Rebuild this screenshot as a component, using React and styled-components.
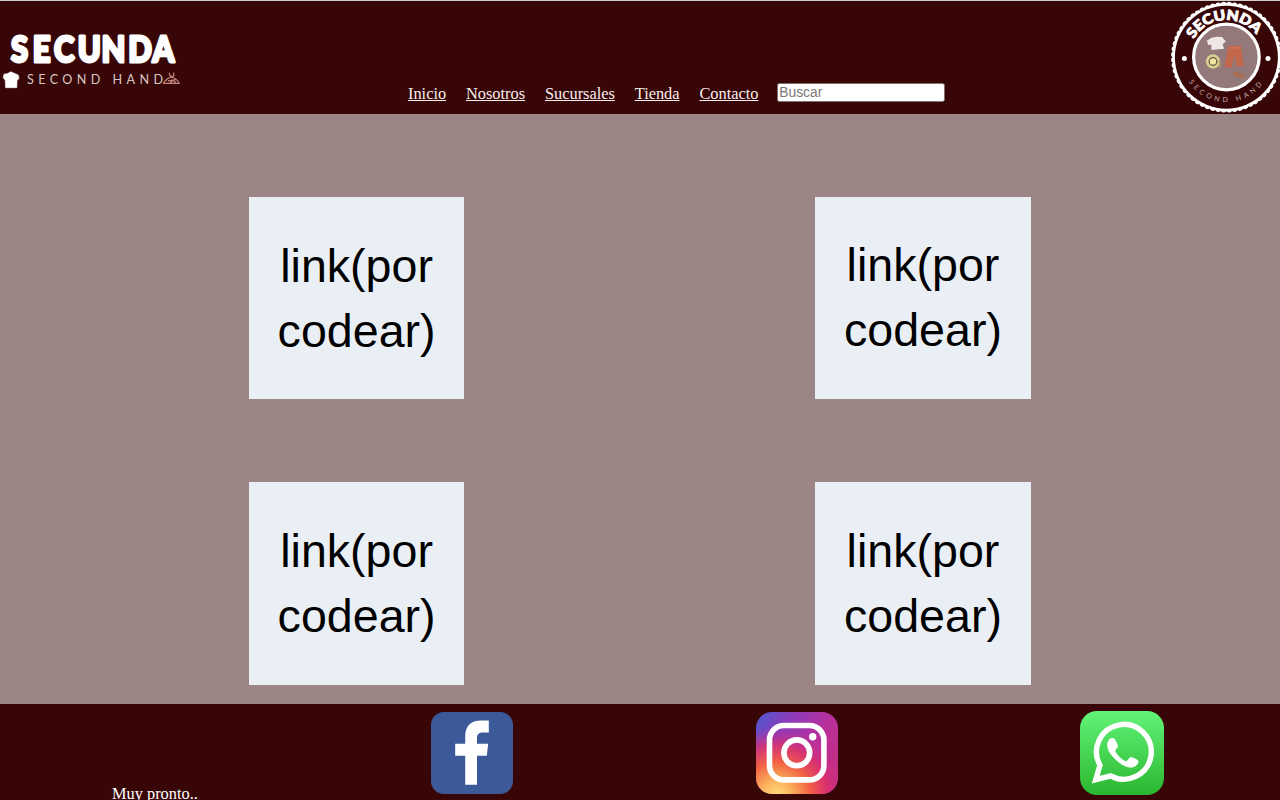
import React from 'react';
import styled, { createGlobalStyle } from 'styled-components';

const GlobalStyle = createGlobalStyle`
  * { box-sizing: border-box; }
  body { margin: 0; background: #380607; overflow: hidden; }
`;

const Page = styled.div`
  display: flex;
  flex-direction: column;
  height: 800px;
  overflow: hidden;
  font-family: "Liberation Serif", "Times New Roman", serif;
  font-size: 16.35px;
  color: #fff;
`;

const Header = styled.header`
  display: flex;
  flex: 0 0 114px;
  align-items: flex-end;
  justify-content: space-between;
  border-top: 1px solid #d3cccd;
  background: #380607;
`;

const Logo = styled.svg`
  display: block;
  flex: none;
  width: 184px;
  height: 113px;
`;

const Badge = styled.svg`
  display: block;
  flex: none;
  width: 110px;
  height: 113px;
`;

const Nav = styled.nav`
  display: flex;
  align-items: flex-end;
  gap: 19.9px;
  margin-right: auto;
  margin-left: 224px;
  padding-bottom: 11px;
`;

const NavLink = styled.a`
  color: #f7eeee;
  line-height: 19px;
  text-decoration: underline;
`;

const Search = styled.input`
  width: 168px;
  height: 19px;
  margin: 0 0 1px -1px;
  padding: 0 1px;
  border: 1px solid #807070;
  border-radius: 2.5px;
  background: #fff;
  font: 13.8px "Liberation Sans", Arial, sans-serif;
  color: #222;
  &::placeholder { color: #7b7777; opacity: 1; }
`;

const Main = styled.main`
  display: grid;
  flex: 0 0 590px;
  grid-template-columns: 215.4px 215.4px;
  grid-template-rows: 202.5px 202.5px;
  column-gap: 351px;
  row-gap: 83px;
  justify-content: start;
  align-content: start;
  padding-top: 82.7px;
  padding-left: 248.9px;
  background: #9b8585;
`;

const Card = styled.a`
  display: flex;
  align-items: center;
  justify-content: center;
  padding-top: ${({ $raised }) => ($raised ? '0' : '2px')};
  background: #eaeff6;
  color: #000;
  font-family: "Liberation Sans", Arial, sans-serif;
  font-size: 46.6px;
  line-height: 65px;
  text-align: center;
`;

const Footer = styled.footer`
  display: flex;
  flex: 0 0 96px;
  align-items: flex-start;
  background: #380607;
`;

const Soon = styled.p`
  width: 319px;
  margin: 80px 0 0 112px;
  line-height: 19px;
`;

const SocialLinks = styled.div`
  display: flex;
  align-items: center;
  gap: 242.5px;
  padding-top: 7px;
`;

const SocialIcon = styled.svg`
  display: block;
  width: ${({ $size }) => $size}px;
  height: ${({ $size }) => $size}px;
`;

const SECTIONS = ['Inicio', 'Nosotros', 'Sucursales', 'Tienda', 'Contacto'];
const CARDS = [{ id: 1 }, { id: 2, raised: true }, { id: 3 }, { id: 4 }];

// Scalloped outline of the round seal.
function scallops(cx, cy, r, count) {
  const point = (i) => {
    const a = (i / count) * Math.PI * 2;
    return `${(cx + r * Math.cos(a)).toFixed(2)} ${(cy + r * Math.sin(a)).toFixed(2)}`;
  };
  let d = `M${point(0)}`;
  for (let i = 1; i <= count; i += 1) d += `A3.4 3.4 0 0 1 ${point(i)}`;
  return `${d}Z`;
}

function BrandLogo() {
  return (
    <Logo viewBox="0 1 184 113">
      <text transform="translate(.6 62) scale(.86 1)" x="12.2 37.3 62.2 89.6 117.2 148.4 176.6" y="0" fontFamily="Lato, sans-serif" fontWeight="900" fontSize="36" fill="#fff" stroke="#fff" strokeWidth="3" strokeLinejoin="round">SECUNDA</text>
      <text x="27" y="84.2" textLength="136" fontFamily="Lato, sans-serif" fontWeight="400" fontSize="12.6" fill="#d9c6c2">SECOND HAND</text>
      <path d="M5.6 87.7 5.2 80.2 3.2 77.6 4 74.2 7.2 73.7 10.8 71.8 14.8 73.5 18.2 75 19 78.3 17 80.8 16.8 87.7Z" fill="#fff" stroke="#fff" strokeWidth=".6" strokeLinejoin="round" />
      <g fill="none" stroke="#c4867a" strokeWidth="1.25" strokeLinecap="round" strokeLinejoin="round">
        <path d="M163.3 83.3H179.3Q176.5 78.2 172.3 77.5Q167.5 77 163.3 83.3M168.3 80.8 175.8 79.7M170 83 173 80.2 176 83M169.3 73.3Q169.5 76.2 172.3 77.3M173.8 73Q174.3 75.5 172.3 77.3" />
      </g>
    </Logo>
  );
}

function Seal() {
  return (
    <Badge viewBox="1170 1 110 113">
      <path d={scallops(1226.4, 57.2, 54, 60)} fill="#fff" />
      <circle cx="1226.4" cy="57.2" r="51.5" fill="#380607" />
      <circle cx="1226.4" cy="57" r="32.8" fill="#94797a" stroke="#fff" strokeWidth="3.2" />
      <circle cx="1184.4" cy="58.4" r="2.5" fill="#fff" />
      <circle cx="1268" cy="58.4" r="2.5" fill="#fff" />
      <path id="seal-top" d="M1189.1 57.2A37.3 37.3 0 0 1 1263.7 57.2" fill="none" />
      <path id="seal-bottom" d="M1181.4 57.2A45 45 0 0 0 1271.4 57.2" fill="none" />
      <text fontFamily="Lato, sans-serif" fontWeight="900" fontSize="14" fill="#fff" stroke="#fff" strokeWidth=".9">
        <textPath href="#seal-top" startOffset="18.7" textLength="74" lengthAdjust="spacingAndGlyphs">SECUNDA</textPath>
      </text>
      <text fontFamily="Lato, sans-serif" fontSize="7" fill="#c4acaa">
        <textPath href="#seal-bottom" startOffset="26" textLength="86">SECOND HAND</textPath>
      </text>
      <path d="M1206.8 40.8 1211.5 37.7 1217 36.8 1222 37 1225.8 41.4 1222.5 44.2 1224.2 48.8 1211.5 50 1211.3 44.8 1208.3 45Z" fill="#efe6e6" />
      <path d="M1228 46 1240.8 45.7 1244 66 1236.7 66.4 1234.5 54.8 1231.8 68 1224.5 66.7Z" fill="#c2664c" />
      <path d="M1228.2 48 1240.8 47.8" stroke="#d57b5f" strokeWidth="1" />
      <circle cx="1213" cy="61.5" r="7.2" fill="#d7ce92" />
      <circle cx="1213" cy="61.5" r="3.8" fill="#eee4a4" stroke="#62513e" strokeWidth="1.2" />
      <path d="M1219 60.5Q1221.5 65 1219.5 68" stroke="#ac9661" strokeWidth="1.3" fill="none" />
      <g fill="none" stroke="#b06a42" strokeWidth="1.4">
        <ellipse cx="1236.3" cy="74.3" rx="2.2" ry="1.6" />
        <ellipse cx="1241.5" cy="75.6" rx="2" ry="1.7" />
      </g>
      <circle cx="1222.5" cy="70.3" r=".7" fill="#b38268" />
    </Badge>
  );
}

function Facebook() {
  return (
    <SocialIcon $size={82} viewBox="0 0 82 82">
      <rect width="82" height="82" rx="13" fill="#3c5a99" />
      <path d="M34.2 72.8V43.8H24.2V31.8H34.2V24.5C34.2 13.8 40 8.6 50 8.6H57.8V20.6H52.2C47 20.6 46 23 46 27V31.8H57.2L55.8 43.8H46V72.8Z" fill="#fff" />
    </SocialIcon>
  );
}

function Instagram() {
  return (
    <SocialIcon $size={82} viewBox="0 0 82 82">
      <defs>
        <linearGradient id="ig-base" x1="0" y1="0" x2="1" y2=".7">
          <stop offset="0" stopColor="#4a5bd2" />
          <stop offset=".3" stopColor="#8a3bbb" />
          <stop offset=".65" stopColor="#b8309c" />
          <stop offset="1" stopColor="#c52d81" />
        </linearGradient>
        <radialGradient id="ig-warm" cx=".25" cy="1.02" r=".83">
          <stop offset="0" stopColor="#ffdc80" />
          <stop offset=".22" stopColor="#fcb45c" />
          <stop offset=".5" stopColor="#f26044" />
          <stop offset=".75" stopColor="#df3269" stopOpacity=".8" />
          <stop offset="1" stopColor="#c62e91" stopOpacity="0" />
        </radialGradient>
      </defs>
      <rect width="82" height="82" rx="16" fill="url(#ig-base)" />
      <rect width="82" height="82" rx="16" fill="url(#ig-warm)" />
      <rect x="13.5" y="13.5" width="54.4" height="54.4" rx="14.5" fill="none" stroke="#fff" strokeWidth="5.6" />
      <circle cx="40.8" cy="40.8" r="12.9" fill="none" stroke="#fff" strokeWidth="5.6" />
      <circle cx="56.7" cy="24.7" r="3.7" fill="#fff" />
    </SocialIcon>
  );
}

function WhatsApp() {
  return (
    <SocialIcon $size={84} viewBox="0 0 84 84">
      <defs>
        <linearGradient id="wa-base" x1="0" y1="0" x2="0" y2="1">
          <stop offset="0" stopColor="#62f478" />
          <stop offset="1" stopColor="#2bb62f" />
        </linearGradient>
      </defs>
      <rect width="84" height="84" rx="17" fill="url(#wa-base)" />
      <path d="M15.7 68.7 20 54.2A27.4 27.4 0 1 1 30.7 64.8Z" fill="none" stroke="#fff" strokeWidth="5.4" />
      <path d="M31.5 27.5C29.8 27.5 27.5 30.1 27.5 34C27.5 39.5 31.5 44.5 36.3 49C42 54.2 47 56.3 50.8 56.3C55 56.3 58 53.3 58.2 50.4C58.4 48.8 51.8 46.3 50.9 46.2C49.5 46.2 47.5 50.5 46.2 50.5C44.5 50.5 40.4 47.6 38 44.6C36.6 42.8 35 40.7 35 39.8C35 38.5 37.7 36.6 37.7 35.2C37.7 34.2 35 28.5 34.2 27.8C33.7 27.4 32.5 27.5 31.5 27.5Z" fill="#fff" stroke="#fff" strokeWidth=".6" />
    </SocialIcon>
  );
}

export default function App() {
  return (
    <Page>
      <GlobalStyle />
      <Header>
        <BrandLogo />
        <Nav>
          {SECTIONS.map((name) => <NavLink key={name} href="#">{name}</NavLink>)}
          <Search placeholder="Buscar" />
        </Nav>
        <Seal />
      </Header>
      <Main>
        {CARDS.map(({ id, raised }) => (
          <Card key={id} $raised={raised}>link(por<br />codear)</Card>
        ))}
      </Main>
      <Footer>
        <Soon>Muy pronto..</Soon>
        <SocialLinks>
          <Facebook />
          <Instagram />
          <WhatsApp />
        </SocialLinks>
      </Footer>
    </Page>
  );
}
